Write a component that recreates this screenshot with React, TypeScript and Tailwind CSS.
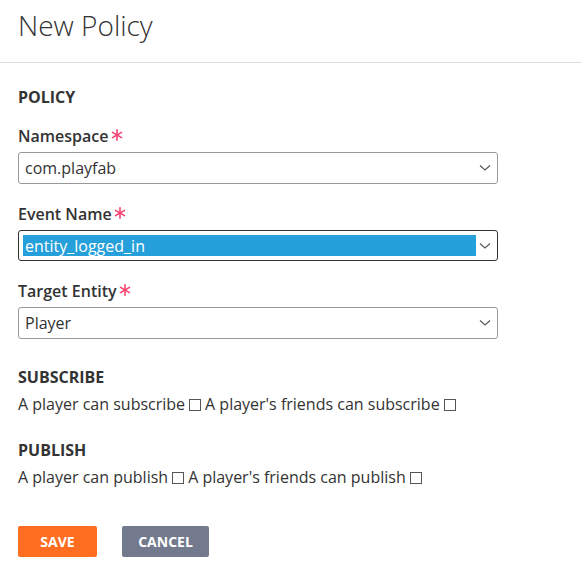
import React from "react";

const Chevron = () => (
  <svg width="12" height="8" viewBox="0 0 12 8" className="absolute right-[6px] top-1/2 -translate-y-1/2">
    <path d="M1 1.5 L6 6 L11 1.5" fill="none" stroke="#555" strokeWidth="1.1" />
  </svg>
);

const Star = () => (
  <svg width="12" height="12" viewBox="0 0 12 12" className="ml-[2px] mt-[4px]">
    <g stroke="#f7426f" strokeWidth="1.6" strokeLinecap="round">
      <line x1="6" y1="0.8" x2="6" y2="11.2" />
      <line x1="1.5" y1="3.4" x2="10.5" y2="8.6" />
      <line x1="1.5" y1="8.6" x2="10.5" y2="3.4" />
    </g>
  </svg>
);

const Label = ({ children }: { children: React.ReactNode }) => (
  <div className="text-[16px] font-semibold text-[#333] leading-[22px] flex items-start">
    {children}
    <Star />
  </div>
);

const Box = () => (
  <span className="inline-block w-[12px] h-[12px] border border-[#555] align-[-1px] mx-[4px] bg-white" />
);

export default function App() {
  return (
    <div className="w-[581px] h-[586px] bg-white text-[#333]" style={{ fontFamily: '"Open Sans", sans-serif' }}>
      <div className="px-[18px] pt-[6px] h-[63px] border-b border-[#ddd]">
        <h1 className="text-[28px] font-light leading-[38px] text-[#333]">New Policy</h1>
      </div>
      <div className="px-[18px] pt-[23px]">
        <div className="text-[16px] font-bold leading-[22px] text-[#333]">POLICY</div>
        <div className="mt-[17px]">
          <Label>Namespace</Label>
          <div className="relative mt-[5px] w-[480px] h-[32px] border border-[#999] rounded-[3px] flex items-center px-[6px] text-[16px]">
            com.playfab
            <Chevron />
          </div>
        </div>
        <div className="mt-[19px]">
          <Label>Event Name</Label>
          <div className="relative mt-[5px] w-[480px] h-[31px] border border-[#333] rounded-[3px] flex items-center pl-[4px] text-[16px]">
            <div className="w-[453px] h-[21px] bg-[#26a0da] text-white flex items-center pl-[2px]">entity_logged_in</div>
            <Chevron />
          </div>
        </div>
        <div className="mt-[19px]">
          <Label>Target Entity</Label>
          <div className="relative mt-[5px] w-[480px] h-[32px] border border-[#999] rounded-[3px] flex items-center px-[6px] text-[16px]">
            Player
            <Chevron />
          </div>
        </div>
        <div className="mt-[27px] text-[16px] font-bold leading-[22px]">SUBSCRIBE</div>
        <div className="mt-[5px] text-[16px] leading-[22px]">
          A player can subscribe<Box />A player's friends can subscribe<Box />
        </div>
        <div className="mt-[24px] text-[16px] font-bold leading-[22px]">PUBLISH</div>
        <div className="mt-[5px] text-[16px] leading-[22px]">
          A player can publish<Box />A player's friends can publish<Box />
        </div>
        <div className="mt-[38px] flex gap-[25px]">
          <button className="w-[79px] h-[31px] bg-[#ff6d21] text-white text-[14px] font-bold rounded-[2px]">SAVE</button>
          <button className="w-[87px] h-[31px] bg-[#737a8e] text-white text-[14px] font-bold rounded-[2px]">CANCEL</button>
        </div>
      </div>
    </div>
  );
}
